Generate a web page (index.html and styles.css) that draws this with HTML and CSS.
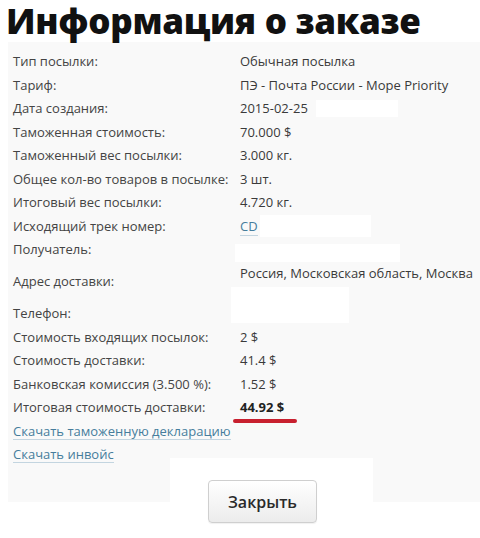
FILE: index.html
```html
<!DOCTYPE html>
<html lang="ru">
<head>
<meta charset="utf-8">
<link rel="stylesheet" href="styles.css">
</head>
<body>
<h1 class="title">Информация о заказе</h1>
<div class="panel">
  <div class="row"><div class="lbl">Тип посылки:</div><div class="val">Обычная посылка</div></div>
  <div class="row"><div class="lbl">Тариф:</div><div class="val">ПЭ - Почта России - Море Priority</div></div>
  <div class="row"><div class="lbl">Дата создания:</div><div class="val">2015-02-25<span class="redact r-date"></span></div></div>
  <div class="row"><div class="lbl">Таможенная стоимость:</div><div class="val">70.000 $</div></div>
  <div class="row"><div class="lbl">Таможенный вес посылки:</div><div class="val">3.000 кг.</div></div>
  <div class="row"><div class="lbl">Общее кол-во товаров в посылке:</div><div class="val">3 шт.</div></div>
  <div class="row"><div class="lbl">Итоговый вес посылки:</div><div class="val">4.720 кг.</div></div>
  <div class="row"><div class="lbl">Исходящий трек номер:</div><div class="val"><a class="link" href="#">CD</a><span class="redact r-track"></span></div></div>
  <div class="row"><div class="lbl">Получатель:</div><div class="val"><span class="redact r-name"></span></div></div>
  <div class="row"><div class="lbl">Адрес доставки:</div><div class="val">Россия, Московская область, Москва<span class="redact r-addr"></span></div></div>
  <div class="row"><div class="lbl">Телефон:</div><div class="val"><span class="redact r-phone"></span></div></div>
  <div class="row"><div class="lbl">Стоимость входящих посылок:</div><div class="val">2 $</div></div>
  <div class="row"><div class="lbl">Стоимость доставки:</div><div class="val">41.4 $</div></div>
  <div class="row"><div class="lbl">Банковская комиссия (3.500 %):</div><div class="val">1.52 $</div></div>
  <div class="row"><div class="lbl">Итоговая стоимость доставки:</div><div class="val"><span class="total">44.92 $</span></div></div>
  <div class="row"><a class="link" href="#">Скачать таможенную декларацию</a></div>
  <div class="row"><a class="link" href="#">Скачать инвойс</a></div>
</div>
<div class="footer">
  <button class="btn" type="button">Закрыть</button>
</div>
</body>
</html>
```
FILE: styles.css
```css
html, body {
  margin: 0;
  padding: 0;
  background: #ffffff;
}
body {
  font-family: "Open Sans", "Liberation Sans", sans-serif;
  color: #3a3a3a;
  width: 480px;
  height: 538px;
  overflow: hidden;
}
.title {
  margin: 0;
  padding-left: 6px;
  font-family: "Open Sans", "Liberation Sans", sans-serif;
  font-weight: 800;
  font-size: 35px;
  line-height: 42px;
  color: #111111;
  letter-spacing: -0.3px;
  white-space: nowrap;
}
.panel {
  margin-left: 8px;
  height: 460px;
  box-sizing: border-box;
  padding: 8px 0 0 5px;
  background: #f9f9f9;
}
.row {
  display: flex;
  align-items: center;
  padding: 3.25px 0;
  font-size: 13px;
  line-height: 17px;
}
.lbl {
  width: 227px;
  flex: none;
  color: #444444;
}
.val {
  color: #3a3a3a;
  white-space: nowrap;
  min-height: 17px;
}
.redact {
  display: inline-block;
  background: #ffffff;
  vertical-align: top;
}
.r-date { width: 82px; height: 17px; margin-left: 8px; }
.r-track { width: 111px; height: 22px; margin: -3px 0 -2px 2px; }
.r-name { display: block; width: 165px; height: 18px; margin: 2.5px 0 -3.5px -5px; }
.r-addr { display: block; width: 118px; height: 15px; margin: 5px 0 -3px -9px; }
.r-phone { display: block; width: 118px; height: 20.5px; margin: -3.25px 0 -0.25px -9px; }
.link {
  color: #467d9c;
  text-decoration: none;
  border-bottom: 1px solid #c3d5e0;
  line-height: 16px;
}
.total {
  font-weight: 700;
  color: #222222;
  position: relative;
}
.total::after {
  content: "";
  position: absolute;
  left: -7px;
  top: 21px;
  width: 64px;
  height: 4px;
  border-radius: 2px;
  background: #c8202f;
}
.footer {
  margin: -44px 0 0 170px;
  width: 203px;
  height: 80px;
  background: #ffffff;
  box-sizing: border-box;
  padding: 22px 0 0 38px;
}
.btn {
  width: 109px;
  height: 43px;
  border: 1px solid #cfcfcf;
  border-radius: 4px;
  background: linear-gradient(#ffffff, #ececec);
  font-family: "Open Sans", "Liberation Sans", sans-serif;
  font-size: 16px;
  font-weight: 600;
  color: #2a2a2a;
  padding: 0;
  box-shadow: 0 1px 1px rgba(0,0,0,0.06);
}
```
